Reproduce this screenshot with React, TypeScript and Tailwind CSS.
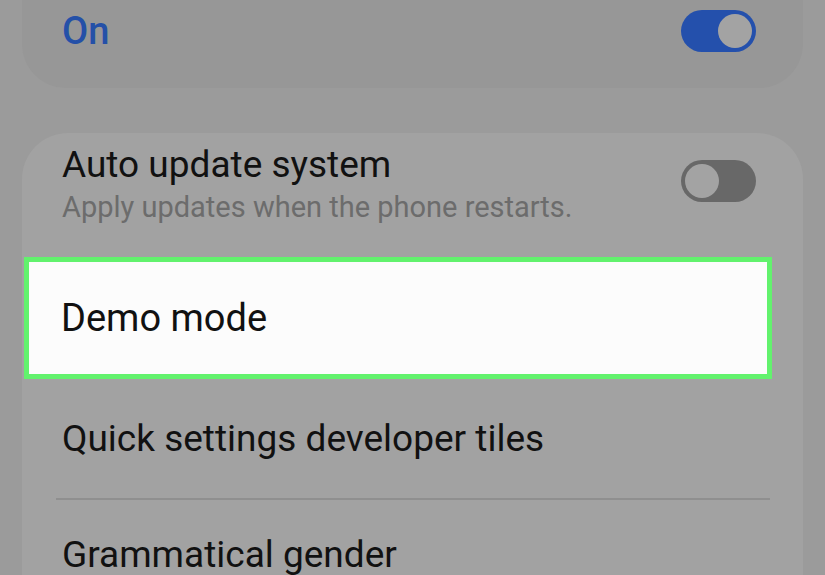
function Toggle({ on }: { on: boolean }) {
  if (on) {
    return (
      <div className="flex h-[42px] w-[75px] items-center justify-end rounded-full bg-[#2450ac] pr-[4px]">
        <div className="h-[34px] w-[34px] rounded-full bg-[#a3a3a3]" />
      </div>
    );
  }
  return (
    <div className="flex h-[42px] w-[75px] items-center justify-start rounded-full bg-[#686868] pl-[4px]">
      <div className="h-[34px] w-[34px] rounded-full bg-[#a3a3a3]" />
    </div>
  );
}

function App() {
  return (
    <div
      className="h-[575px] w-[825px] overflow-hidden bg-[#9b9b9b]"
      style={{ fontFamily: "Roboto, 'Noto Sans', sans-serif" }}
    >
      {/* master switch card, top cut off */}
      <div className="mx-[22px] -mt-[40px] flex h-[128px] items-start justify-between rounded-b-[44px] bg-[#979797] pl-[40px] pr-[47px] pt-[51px]">
        <span className="text-[38px] font-medium leading-[40px] text-[#2450a8]">On</span>
        <div className="-mt-[1px]">
          <Toggle on />
        </div>
      </div>

      {/* settings list card */}
      <div className="mx-[22px] mt-[45px] rounded-t-[46px] bg-[#a2a2a2] pt-[12px]">
        <div className="flex items-center justify-between pl-[40px] pr-[47px]">
          <div className="flex flex-col">
            <span className="text-[37px] leading-[40px] text-[#111]">Auto update system</span>
            <span className="mt-[6px] text-[29px] leading-[32px] text-[#6c6c6c]">
              Apply updates when the phone restarts.
            </span>
          </div>
          <div className="-mt-[6px]">
            <Toggle on={false} />
          </div>
        </div>

        {/* highlighted row */}
        <div className="ml-[2px] mr-[31px] mt-[34px] flex h-[122px] items-center border-[5px] border-[#62f26d] bg-[#fcfcfc] pl-[32px]">
          <span className="text-[38px] leading-[44px] text-[#111]">Demo mode</span>
        </div>

        <div className="flex h-[119px] items-center pl-[40px]">
          <span className="text-[37px] leading-[40px] text-[#111]">Quick settings developer tiles</span>
        </div>
        <div className="ml-[34px] mr-[33px] h-[2px] bg-[#8f8f8f]" />

        <div className="flex h-[110px] items-center pl-[40px]">
          <span className="text-[37px] leading-[40px] text-[#111]">Grammatical gender</span>
        </div>
      </div>
    </div>
  );
}

export default App;
